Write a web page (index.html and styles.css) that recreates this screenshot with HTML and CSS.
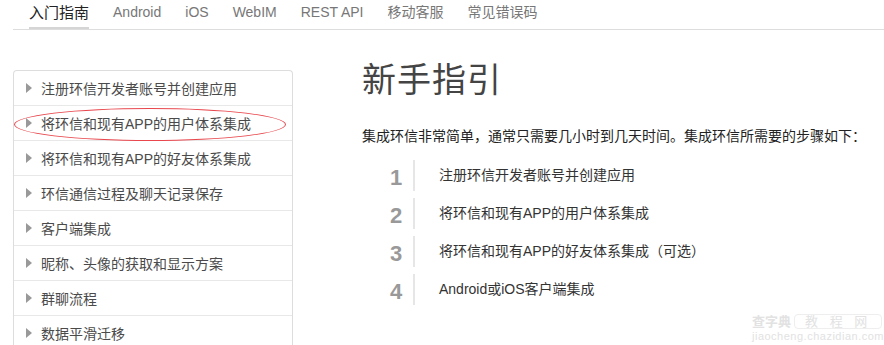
FILE: index.html
```html
<!DOCTYPE html>
<html lang="zh-CN">
<head>
    <meta charset="UTF-8">
    <meta name="viewport" content="width=device-width, initial-scale=1.0">
    <title>新手指引</title>
    <link rel="stylesheet" href="styles.css">
</head>
<body>
    <div class="page">
        <ul class="topnav">
            <li class="active">入门指南</li>
            <li>Android</li>
            <li>iOS</li>
            <li>WebIM</li>
            <li>REST API</li>
            <li>移动客服</li>
            <li>常见错误码</li>
        </ul>

        <div class="content">
            <ul class="sidebar">
                <li><span class="arrow"></span>注册环信开发者账号并创建应用</li>
                <li><span class="arrow"></span>将环信和现有APP的用户体系集成</li>
                <li><span class="arrow"></span>将环信和现有APP的好友体系集成</li>
                <li><span class="arrow"></span>环信通信过程及聊天记录保存</li>
                <li><span class="arrow"></span>客户端集成</li>
                <li><span class="arrow"></span>昵称、头像的获取和显示方案</li>
                <li><span class="arrow"></span>群聊流程</li>
                <li><span class="arrow"></span>数据平滑迁移</li>
            </ul>

            <div class="main">
                <h1>新手指引</h1>
                <p class="intro">集成环信非常简单，通常只需要几小时到几天时间。集成环信所需要的步骤如下：</p>
                <ol class="steps">
                    <li><span class="num">1</span><span class="text">注册环信开发者账号并创建应用</span></li>
                    <li><span class="num">2</span><span class="text">将环信和现有APP的用户体系集成</span></li>
                    <li><span class="num">3</span><span class="text">将环信和现有APP的好友体系集成（可选）</span></li>
                    <li><span class="num">4</span><span class="text">Android或iOS客户端集成</span></li>
                </ol>
            </div>
        </div>

        <!-- hand drawn mark around the second menu entry -->
        <div class="circle"></div>

        <div class="watermark">
            <div class="wm-top"><b>查字典</b><span class="wm-box">教 程 网</span></div>
            <div class="wm-url">jiaocheng.chazidian.com</div>
        </div>
    </div>
</body>
</html>
```

FILE: styles.css
```css
body {
    margin: 0;
    font-family: "Liberation Sans", "Noto Sans CJK SC", sans-serif;
    font-size: 14px;
    color: #333;
    background: #fff;
    overflow: hidden;
}
.page {
    position: relative;
    height: 345px;
}
.topnav {
    display: flex;
    gap: 24px;
    margin: 0 0 0 13px;
    padding: 0 0 0 16px;
    list-style: none;
    height: 29px;
    border-bottom: 1px solid #ddd;
}
.topnav li {
    height: 27px;
    line-height: 25px;
    color: #777;
    border-bottom: 2px solid transparent;
}
.topnav li.active {
    color: #222;
    font-size: 15px;
    border-bottom-color: #d5d5d5;
}
.content {
    display: flex;
    padding-left: 13px;
}
.sidebar {
    width: 278px;
    margin: 40px 0 0;
    padding: 0;
    list-style: none;
    border: 1px solid #ddd;
    border-bottom: none;
    border-radius: 4px 4px 0 0;
}
.sidebar li {
    display: flex;
    align-items: center;
    gap: 9px;
    height: 34px;
    padding-left: 12px;
    border-bottom: 1px solid #e8e8e8;
    color: #4a4a4a;
}
.arrow {
    width: 0;
    height: 0;
    border-left: 6px solid #999;
    border-top: 5px solid transparent;
    border-bottom: 5px solid transparent;
}
.main {
    margin-left: 69px;
}
h1 {
    margin: 30px 0 0;
    font-size: 34px;
    font-weight: normal;
    line-height: 40px;
    color: #444;
    letter-spacing: 1px;
}
.intro {
    margin: 25px 0 0;
    line-height: 22px;
    color: #222;
}
.steps {
    margin: 13px 0 0 26px;
    padding: 0;
    list-style: none;
    display: flex;
    flex-direction: column;
    gap: 7px;
}
.steps li {
    display: flex;
    height: 31px;
}
.num {
    width: 16px;
    text-align: center;
    font-size: 22px;
    font-weight: bold;
    line-height: 36px;
    color: #999;
}
.text {
    margin-left: 9px;
    padding-left: 24px;
    border-left: 2px solid #e6e6e6;
    line-height: 31px;
    color: #333;
}
.circle {
    position: absolute;
    left: 14px;
    top: 108px;
    width: 270px;
    height: 31px;
    border: 1px solid #e8474d;
    border-radius: 50%;
}
.watermark {
    position: absolute;
    left: 752px;
    top: 314px;
    color: #e2e2e2;
    line-height: 1;
}
.wm-top {
    display: flex;
    align-items: center;
    gap: 3px;
    font-size: 13px;
}
.wm-box {
    border: 1px solid #eee;
    border-radius: 4px;
    padding: 0 10px;
    letter-spacing: 4px;
}
.wm-url {
    margin-top: 2px;
    font-size: 11px;
    letter-spacing: 0.5px;
}
```
